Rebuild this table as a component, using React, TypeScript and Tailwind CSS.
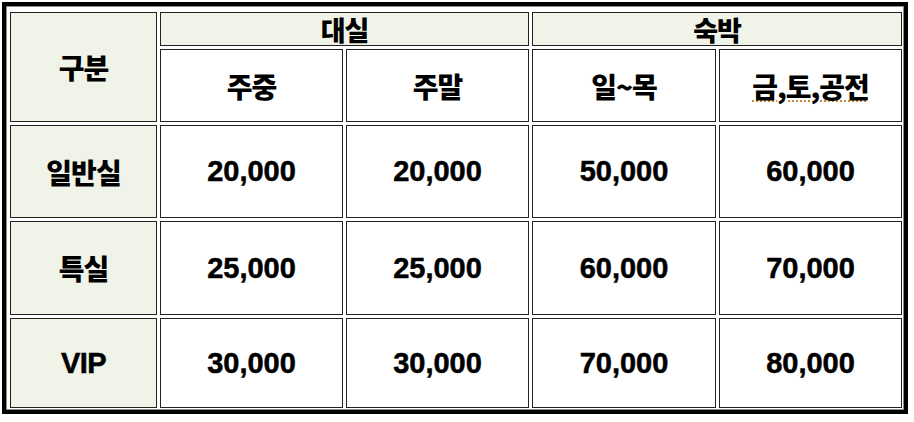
import React from "react";

const ko = { fontFamily: '"Noto Sans CJK KR", "Noto Sans", sans-serif' };
const num = { fontFamily: '"Liberation Sans", Arial, sans-serif' };

const cell = "flex items-center justify-center border border-[#222]";
const head = `${cell} bg-[#f0f3e7]`;
const data = `${cell} bg-white`;
const koText = "text-[28px] font-black leading-none tracking-[-1px]";
const numText = "text-[29px] font-bold leading-none [-webkit-text-stroke:0.5px_black]";

const rows = [
  { label: "일반실", isKo: true, v: ["20,000", "20,000", "50,000", "60,000"] },
  { label: "특실", isKo: true, v: ["25,000", "25,000", "60,000", "70,000"] },
  { label: "VIP", isKo: false, v: ["30,000", "30,000", "70,000", "80,000"] },
];

export default function App() {
  return (
    <div className="w-[914px] h-[422px] bg-white pt-[2px] pl-[2px]">
      <div className="w-[906px] h-[412px] border-4 border-black">
        <div className="h-full border border-[#8a8a8a] pt-[5px] pb-[1px] pl-[3px] pr-[1px]">
          <div className="grid grid-cols-[147px_183px_183px_184px_183px] grid-rows-[34px_73px_93px_94px_90px] gap-[3px] text-black">
            <div className={`${head} row-span-2`}>
              <span style={ko} className={koText}>구분</span>
            </div>
            <div className={`${head} col-span-2`}>
              <span style={ko} className="text-[27px] font-black leading-none tracking-[-1px]">대실</span>
            </div>
            <div className={`${head} col-span-2`}>
              <span style={ko} className="text-[27px] font-black leading-none tracking-[-1px]">숙박</span>
            </div>
            <div className={data}>
              <span style={ko} className={koText}>주중</span>
            </div>
            <div className={data}>
              <span style={ko} className={koText}>주말</span>
            </div>
            <div className={data}>
              <span style={ko} className={koText}>일~목</span>
            </div>
            <div className={data}>
              <span
                style={ko}
                className={`${koText} underline decoration-dotted decoration-[#c8883a] decoration-2 underline-offset-[3px]`}
              >
                금,토,공전
              </span>
            </div>
            {rows.map((r) => (
              <React.Fragment key={r.label}>
                <div className={head}>
                  {r.isKo ? (
                    <span style={ko} className={koText}>{r.label}</span>
                  ) : (
                    <span style={num} className={`${numText} tracking-[-0.5px]`}>{r.label}</span>
                  )}
                </div>
                {r.v.map((v, i) => (
                  <div key={i} className={data}>
                    <span style={num} className={numText}>{v}</span>
                  </div>
                ))}
              </React.Fragment>
            ))}
          </div>
        </div>
      </div>
    </div>
  );
}
